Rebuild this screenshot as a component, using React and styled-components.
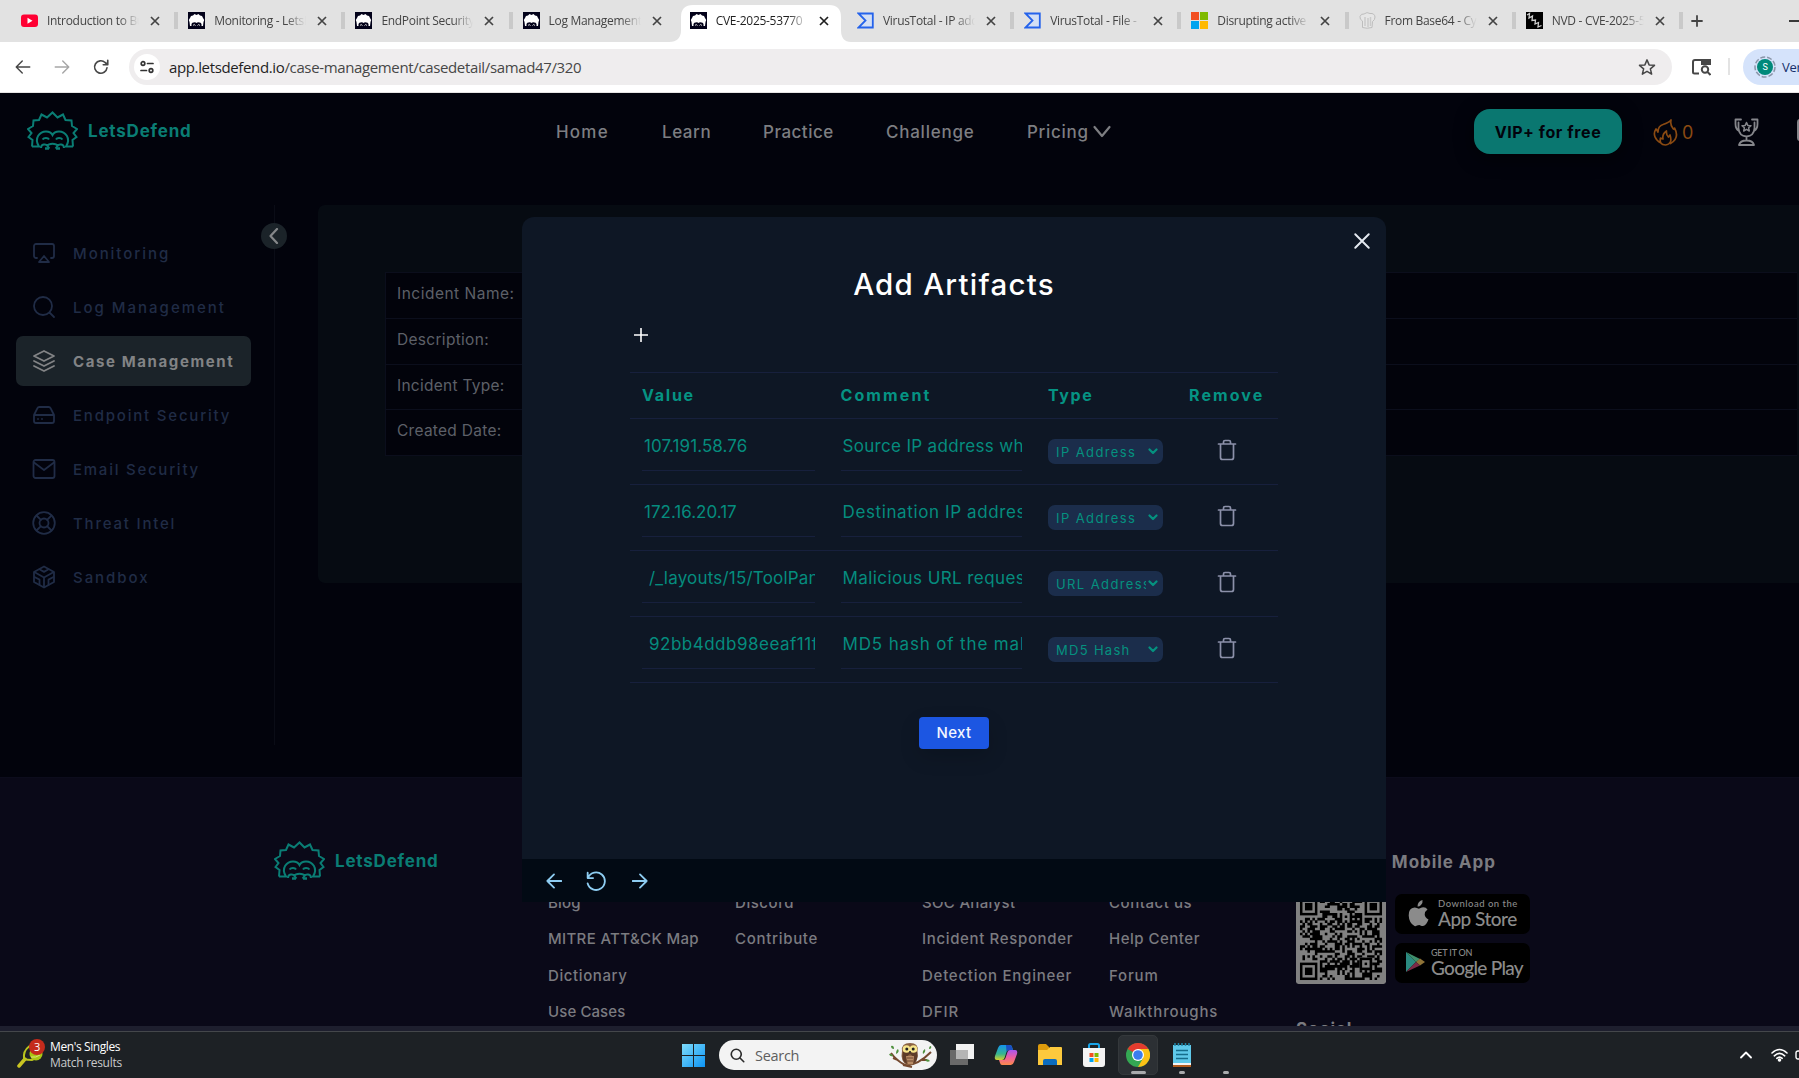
import React from "react";
import styled, { createGlobalStyle, css } from "styled-components";

const Global = createGlobalStyle`
  *{box-sizing:border-box}
  html,body{margin:0;padding:0;background:#02030c;overflow:hidden}
  body{font-family:Inter,"Liberation Sans",sans-serif}
  svg{display:block;flex:none}
`;

const ui = `"Open Sans","Noto Sans",sans-serif`;

const Screen = styled.div`width:1799px;height:1078px;display:flex;flex-direction:column;overflow:hidden;`;

/* ---------- browser ---------- */
const TabStrip = styled.div`
  height:42px;flex:none;background:#e2e2e2;display:flex;padding-left:9px;overflow:hidden;
`;
const Tab = styled.div`
  width:167.2px;height:42px;flex:none;padding:0 0 1px 12px;display:flex;align-items:center;position:relative;
`;
const TabShape = styled.svg`position:absolute;left:-9px;top:5px;z-index:0;`;
const TabTitle = styled.span`
  margin-left:9px;width:92px;flex:none;overflow:hidden;white-space:nowrap;position:relative;
  font:400 12px/18px ${ui};letter-spacing:-0.3px;color:${p => (p.$active ? "#1f1f1f" : "#444")};
  mask-image:linear-gradient(90deg,#000 78%,transparent 100%);
`;
const TabIcon = styled.span`width:17px;height:17px;flex:none;position:relative;`;
const TabClose = styled.svg`margin-left:11px;position:relative;`;
const TabSep = styled.span`position:absolute;right:-2px;top:12px;width:4px;height:17px;background:#c9c9c9;`;
const StripTools = styled.div`display:flex;align-items:center;padding:0 0 1px 10px;gap:86px;`;

const Toolbar = styled.div`
  height:51px;flex:none;background:#fff;display:flex;align-items:center;padding:0 0 1px 14px;border-bottom:1px solid #e6e4e4;
  overflow:hidden;
`;
const NavIcons = styled.div`display:flex;gap:21px;width:115px;flex:none;`;
const Omnibox = styled.div`
  width:1543px;height:36px;border-radius:18px;background:#efedee;display:flex;align-items:center;padding:0 16px 0 5px;flex:none;
`;
const SiteInfo = styled.span`width:26px;height:26px;border-radius:50%;background:#fff;display:grid;place-items:center;`;
const Url = styled.span`
  margin-left:9px;flex:1;font:400 15px/22px ${ui};letter-spacing:-0.36px;color:#474747;white-space:nowrap;
  b{font-weight:400;color:#1f1f1f}
`;
const ToolDivider = styled.span`width:2px;height:17px;background:#e3e3e3;margin:0 13px 0 17px;flex:none;`;
const SearchPanel = styled.svg`margin-left:19px;`;
const Profile = styled.div`
  width:120px;height:36px;flex:none;border-radius:18px 0 0 18px;background:#d5e3fb;display:flex;align-items:center;padding-left:11px;
  gap:6px;font:400 13px/20px ${ui};letter-spacing:-.3px;color:#17306a;
`;

/* ---------- page ---------- */
const Page = styled.main`height:933px;flex:none;position:relative;background:#02030c;overflow:hidden;`;
const Label = styled.span`white-space:nowrap;letter-spacing:${p => p.$t || 0}px;`;
const Header = styled.header`height:112px;display:flex;padding:0 0 0 27px;`;
const Brand = styled.div`
  display:flex;align-items:center;gap:10px;color:#0a7d74;font-weight:700;font-size:17px;letter-spacing:.8px;height:39px;
`;
const HeaderBrand = styled(Brand)`margin-top:18px;width:529px;flex:none;`;
const Menu = styled.nav`
  display:flex;height:40px;margin-top:19px;align-items:center;color:#7d7e82;font-weight:500;font-size:17px;width:918px;flex:none;
`;
const MenuItem = styled.span`
  width:${p => p.$w}px;flex:none;letter-spacing:${p => p.$t || 0}px;display:flex;align-items:center;gap:4px;white-space:nowrap;
`;
const Vip = styled.button`
  width:148px;height:45px;margin-top:16px;border:0;border-radius:16px;background:#0a7770;color:#02030c;
  font:700 16px/20px Inter,sans-serif;letter-spacing:.6px;flex:none;padding:0;box-shadow:0 4px 18px rgba(0,0,0,.6);
`;
const Streak = styled.div`
  display:flex;align-items:center;gap:4px;color:#8a4a12;font-size:18px;height:28px;margin:25px 0 0 31px;width:81px;flex:none;
`;
const Trophy = styled.div`margin-top:25px;width:63px;flex:none;`;
const Clipped = styled.span`width:20px;height:22px;margin-top:26px;border:2px solid #85868b;border-radius:3px;flex:none;`;

const Body = styled.div`height:572px;display:flex;`;
const Side = styled.aside`
  width:275px;height:540px;flex:none;border-right:1px solid #0a0c16;padding:23px 0 0 16px;position:relative;
`;
const Collapse = styled.span`
  position:absolute;right:-13px;top:18px;width:26px;height:26px;border-radius:50%;background:#1b2329;display:grid;place-items:center;
`;
const SideItem = styled.div`
  width:235px;height:50px;margin-bottom:4px;border-radius:7px;display:flex;align-items:center;padding-left:16px;gap:17px;
  font-size:15px;letter-spacing:${p => p.$t}px;white-space:nowrap;
  ${p => (p.$active ? css`background:#1b2329;color:#828385;font-weight:700;` : css`color:#202c46;font-weight:500;`)}
`;
const Panel = styled.section`
  margin-left:43px;flex:1;height:378px;background:#060b12;border-radius:7px 0 0 7px;padding:67px 0 0 67px;
`;
const Facts = styled.div`border:1px solid #0b0e1c;border-right:0;border-bottom:0;background:#02030b;margin-right:2px;`;
const Fact = styled.div`
  height:45.8px;border-bottom:1px solid #0b0e1c;padding:11px 0 0 11px;font-size:15.5px;line-height:20px;color:#5d6068;
  letter-spacing:${p => p.$t}px;
`;

const PageFooter = styled.footer`
  height:249px;background:#0a0918;border-top:1px solid #0c0c1c;display:flex;padding:63px 0 0 274px;color:#7b7b80;
`;
const FooterBrand = styled(Brand)`width:274px;flex:none;`;
const LinkCol = styled.div`width:187px;flex:none;padding-top:44px;display:flex;flex-direction:column;`;
const FootLink = styled.span`
  height:36.3px;line-height:36.3px;font-size:15px;font-weight:500;white-space:nowrap;letter-spacing:${p => p.$t || 0}px;
`;
const AppCol = styled.div`display:flex;flex-direction:column;padding-top:10px;`;
const FootTitle = styled.h4`
  margin:0;font-size:17px;line-height:22px;height:22px;font-weight:700;white-space:nowrap;letter-spacing:.95px;
`;
const Stores = styled.div`display:flex;gap:9px;margin:21px 0 34px;height:90px;`;
const Badges = styled.div`display:flex;flex-direction:column;gap:9px;`;
const Badge = styled.div`
  width:135px;height:40px;border-radius:7px;background:#000;display:flex;align-items:center;color:#8b8b8b;padding-left:${p => p.$l}px;gap:${p => p.$g}px;
  padding-bottom:2px;
`;
const BadgeText = styled.span`
  display:flex;flex-direction:column;font-family:Lato,sans-serif;
  small{font-size:${p => p.$s}px;line-height:11px;letter-spacing:${p => p.$st}px;white-space:nowrap;font-weight:500}
  b{font-weight:500;font-size:19px;line-height:19px;letter-spacing:${p => p.$t}px;white-space:nowrap}
`;

/* ---------- modal ---------- */
const Modal = styled.div`
  position:absolute;left:522px;top:124px;width:864px;height:685px;border-radius:12px 12px 0 0;background:#0e1725;
  display:flex;flex-direction:column;overflow:hidden;
`;
const ModalTop = styled.div`height:49px;display:flex;justify-content:flex-end;padding:15px 15px 0 0;`;
const ModalTitle = styled.h2`
  margin:0;height:36px;line-height:36px;text-align:center;color:#fff;font-weight:500;font-size:29.5px;letter-spacing:1.25px;
`;
const AddRow = styled.div`height:70px;padding:26px 0 0 112px;`;
const Table = styled.div`width:648px;margin-left:108px;border-top:1px solid #17203d;`;
const row = css`display:grid;grid-template-columns:198.500px 207.500px 141px 1fr;padding-left:12px;border-bottom:1px solid #17203d;`;
const HeadRow = styled.div`
  ${row} height:46px;align-items:center;color:#059383;font-weight:700;font-size:16px;padding-bottom:2px;
`;
const Row = styled.div`${row} height:66px;`;
const Input = styled.div`
  width:${p => p.$w}px;height:38px;margin-top:14px;border-bottom:1px solid #17203d;color:#058c7e;font-size:17px;line-height:27px;
  padding-left:${p => p.$l}px;overflow:hidden;white-space:nowrap;letter-spacing:${p => p.$t || 0}px;font-weight:400;
`;
const Select = styled.div`
  width:115px;height:25px;margin-top:20px;border-radius:7px;background:#1b2d4b;color:#05917f;display:flex;align-items:center;
  padding:1px 4px 0 8px;font-size:13px;gap:2px;
  span{width:90px;overflow:hidden;white-space:nowrap;letter-spacing:${p => p.$t}px;line-height:20px}
`;
const Trash = styled.div`padding:20px 0 0 28px;`;
const Next = styled.button`
  width:70px;height:32px;border:0;border-radius:4px;background:#1c56e2;color:#f3f6ff;font:500 15px/20px Inter,sans-serif;
  letter-spacing:.3px;margin:34px auto 0;padding:0;box-shadow:0 8px 20px rgba(0,0,0,.16);
`;
const ModalBar = styled.div`
  height:43px;margin-top:auto;background:#020a14;display:grid;grid-template-columns:40px 46px 20px;align-items:center;padding-left:24px;
`;

/* ---------- taskbar ---------- */
const ScrollEdge = styled.div`height:6px;flex:none;background:#1e1f2e;border-bottom:1px solid #44474b;`;
const Taskbar = styled.div`
  height:46px;flex:none;background:#1d2125;display:flex;align-items:center;font-family:${ui};color:#fff;
`;
const Widget = styled.div`
  width:682px;display:flex;padding-left:17px;gap:5px;font-size:12px;line-height:16px;letter-spacing:-.2px;align-items:center;
  div{display:flex;flex-direction:column}
  em{font-style:normal;color:#c9cacb}
`;
const SearchBox = styled.div`
  width:218px;height:30px;margin:0 13px 0 14px;border-radius:15px;background:#f3f3f3;display:flex;align-items:center;padding:0 5px 0 11px;
  color:#5e5e5e;font-size:14.5px;
  span{margin-left:10px;flex:1;letter-spacing:-.3px}
`;
const Pin = styled.div`
  width:${p => p.$w || 44}px;height:46px;flex:none;display:flex;flex-direction:column;align-items:center;padding-top:11px;position:relative;
  margin-left:${p => p.$ml || 0}px;
`;
const ActivePin = styled(Pin)`
  width:40px;height:40px;margin:0 2px;padding-top:7px;border-radius:5px;background:#2c3034;border:1px solid #34383b;
`;
const Mark = styled.i`width:${p => p.$w}px;height:3px;border-radius:2px;background:#a9abad;position:absolute;bottom:${p => p.$b ?? 4}px;`;
const Tray = styled.div`
  margin-left:auto;display:grid;grid-template-columns:31px 24px 17px;align-items:center;width:59px;overflow:hidden;
`;

/* ---------- drawings ---------- */
const Line = ({ s = 24, w = 2, c = "currentColor", children, vb = "0 0 24 24", h }) => (
  <svg width={s} height={h || s} viewBox={vb} fill="none" stroke={c} strokeWidth={w} strokeLinecap="round" strokeLinejoin="round">{children}</svg>
);

const Hedgehog = () => (
  <svg width="51" height="39" viewBox="0 0 51 39" fill="none" stroke="#0a7d74" strokeWidth="2">
    <path d="M5 35.500L5.500 29L1.500 26L4.500 22L1 18L6 15L6.500 9.500L12 9L14.500 3.500L20 6.500L25.500 1.500L30.500 6.500L36 3.500L38.500 9L44.500 9.500L45 15L50 18L46.500 22L49.500 26L45.500 29L46 35.500" />
    <path d="M5 35.500H12C6.500 27 13 20.500 19 20.500C22 20.500 24.500 22 25.500 24C26.500 22 29 20.500 32 20.500C38 20.500 44.500 27 39 35.500H46" />
    <path d="M14 37C14 33 19 32.500 20.500 35L22.500 37.500M37 37C37 33 32 32.500 30.500 35L28.500 37.500M20 35C22 32 29 32 31 35" />
    <path d="M15.500 28.500C17 26.500 21 26.500 22 28.500M29 28.500C30 26.500 34 26.500 35.500 28.500" />
    <path d="M18 37.500h4M29 37.500h4" strokeWidth="2.500" />
  </svg>
);

const Favicons = {
  yt: <svg width="17" height="17" viewBox="0 0 17 17"><rect y="2.500" width="17" height="12.500" rx="3" fill="#ff0033" /><path d="M6.500 5.800v6L11.500 8.800z" fill="#fff" /></svg>,
  ld: <svg width="17" height="17" viewBox="0 0 17 17"><rect width="17" height="17" fill="#03021a" /><path d="M2 14L1.500 10L.8 8L2 6L3 4L5 3.500L6.500 2L8.500 3L10.500 2L12 3.500L14 4L15 6L16.200 8L15.500 10L15 14H13.500Q14 10.500 11.500 10.500Q9.500 10 8.500 11Q7.500 10 5.500 10.500Q3 10.500 3.500 14z" fill="#fff" /><path d="M5 13.500q1-2 2.500 0M9.500 13.500q1-2 2.500 0" stroke="#ddd" fill="none" /></svg>,
  vt: <svg width="17" height="17" viewBox="0 0 17 17"><path d="M1.500 1.500H15.800V15.500H1.500L8.500 8.500z" fill="#d3dff5" stroke="#2563eb" strokeWidth="1.800" /></svg>,
  ms: <svg width="17" height="17" viewBox="0 0 17 17"><path fill="#f25022" d="M0 0h8v8H0z" /><path fill="#7fba00" d="M9 0h8v8H9z" /><path fill="#00a4ef" d="M0 9h8v8H0z" /><path fill="#ffb900" d="M9 9h8v8H9z" /></svg>,
  chef: <svg width="17" height="17" viewBox="0 0 17 17"><path d="M3.500 15.500V9Q.5 7.500 1 4.500Q2 1.500 5 2Q8-.5 11 1.500Q15.500 1 16 5Q16 8 13.500 9.500L13 15.500Q8 17 3.500 15.500z" fill="#e6e6e6" stroke="#bdbdbd" /><path d="M6 5v9M9 6v9M11.500 5v9" stroke="#cacaca" strokeWidth="1.500" /></svg>,
  nvd: <svg width="17" height="17" viewBox="0 0 17 17"><rect width="17" height="17" fill="#000" /><path d="M1 3L3.500 1.500L3 6L6.500 4L6 8.500L9.500 8L9 12L12.500 10.500L12 15L15.500 13.500" fill="none" stroke="#cfcfcf" strokeWidth="1.300" /></svg>
};

const tabs = [
  ["yt", "Introduction to Bu"], ["ld", "Monitoring - LetsD"], ["ld", "EndPoint Security"], ["ld", "Log Management"],
  ["ld", "CVE-2025-53770 ", true], ["vt", "VirusTotal - IP addr"], ["vt", "VirusTotal - File - "], ["ms", "Disrupting active e"],
  ["chef", "From Base64 - Cyb"], ["nvd", "NVD - CVE-2025-5"]
];

const Qr = () => {
  const n = 33;
  let seed = 77;
  const cells = [];
  const inFinder = (x, y) => (x < 8 && y < 8) || (x > n - 9 && y < 8) || (x < 8 && y > n - 9);
  for (let y = 0; y < n; y++) for (let x = 0; x < n; x++) {
    seed = (seed * 1103515245 + 12345) % 2147483648;
    if (!inFinder(x, y) && seed / 2147483648 > 0.47) cells.push(`M${x} ${y}h1.02v1.02h-1.02z`);
  }
  const finder = (x, y) => (
    <g key={`${x}-${y}`}><rect x={x + .5} y={y + .5} width="6" height="6" fill="none" stroke="#000" /><rect x={x + 2} y={y + 2} width="3" height="3" /></g>
  );
  return (
    <svg width="90" height="90" viewBox="-1.600 -1.600 36.200 36.200">
      <rect x="-1.600" y="-1.600" width="36.200" height="36.200" rx="1" fill="#818181" />
      <path d={cells.join("")} />
      {finder(0, 0)}{finder(n - 7, 0)}{finder(0, n - 7)}
      <rect x="24" y="24" width="5" height="5" fill="#818181" /><rect x="24.500" y="24.500" width="4" height="4" fill="none" stroke="#000" /><rect x="26" y="26" width="1" height="1" />
    </svg>
  );
};

const Owl = () => (
  <svg width="44" height="26" viewBox="0 0 44 26">
    <path d="M3 11Q9 19 17 23Q29 24 43 10M5 16L10 18M34 18L39 18M15 23L24 25" stroke="#75492f" strokeWidth="2" fill="none" />
    <path d="M3 4q3-1 3 3q-3 0-3-3M1 12q3-1 4 2q-3 1-4-2M8 12q0-4 2-5q2 3-2 5M35 12q-1-3 2-5q1 3-2 5M41 7q0-3 2-3q1 3-2 3M37 18q3-2 5 1q-3 2-5-1" fill="#50913f" />
    <path d="M14 9Q13 1 22 1Q31 1 29.500 9Q31 20 24 23H19Q12 19 14 9z" fill="#8a6142" />
    <path d="M15 10Q13 19 19 22Q17 14 22 12Q27 14 25 22Q31 18 29 10z" fill="#5d3b28" />
    <path d="M18 14h8l-1 8h-5z" fill="#b98c66" /><path d="M19 16h6M19 19h6" stroke="#6d4730" />
    <circle cx="18.500" cy="7" r="3.800" fill="#f7e58b" /><circle cx="25.500" cy="7" r="3.800" fill="#f7e58b" />
    <circle cx="18.800" cy="7" r="1.500" fill="#222" /><circle cx="25.200" cy="7" r="1.500" fill="#222" /><path d="M21 9h2l-1 3z" fill="#333" />
  </svg>
);

const sideItems = [
  ["Monitoring", 1.95, <><path d="M5 17H4a2 2 0 0 1-2-2V5a2 2 0 0 1 2-2h16a2 2 0 0 1 2 2v10a2 2 0 0 1-2 2h-1" /><path d="m12 15 5 6H7Z" /></>],
  ["Log Management", 2, <><circle cx="11" cy="11" r="9" /><path d="m22 22-4.500-4.500" /></>],
  ["Case Management", 1.6, <><path d="M12 2 2 7l10 5 10-5-10-5Z" /><path d="m2 17 10 5 10-5" /><path d="m2 12 10 5 10-5" /></>],
  ["Endpoint Security", 1.8, <><path d="M22 12H2M5.450 5.110 2 12v6a2 2 0 0 0 2 2h16a2 2 0 0 0 2-2v-6l-3.450-6.890A2 2 0 0 0 16.760 4H7.240a2 2 0 0 0-1.790 1.110z" /><path d="M6 16h.01M10 16h.01" /></>],
  ["Email Security", 1.75, <><rect x="1.500" y="3" width="21" height="18" rx="2" /><path d="m2 5.500 10 7.500 10-7.500" /></>],
  ["Threat Intel", 1.8, <><circle cx="12" cy="12" r="10.800" /><circle cx="12" cy="12" r="4.500" /><path d="m4.500 4.500 4.400 4.400M15.100 8.900l4.400-4.400M15.100 15.100l4.400 4.400M8.900 15.100l-4.400 4.400" /></>],
  ["Sandbox", 1.95, <><path d="M22 17V7L12 1.500 2 7v10l10 5.500z" /><path d="m7.500 4.300 4.500 2.600 4.500-2.600M7.500 19.800v-5.200L2.500 12M21.500 12l-5 2.600v5.200M2.700 7.300 12 12.500l9.300-5.200M12 22V12.500" /></>]
];

const facts = [["Incident Name:", .5], ["Description:", .3], ["Incident Type:", .27], ["Created Date:", .27]];

const artifacts = [
  { value: "107.191.58.76", indent: 2, vt: .08, comment: "Source IP address which", ct: .32, type: "IP Address", tt: 1.4 },
  { value: "172.16.20.17", indent: 2, vt: 0, comment: "Destination IP address", ct: .62, type: "IP Address", tt: 1.4 },
  { value: "/_layouts/15/ToolPane", indent: 7, vt: .2, comment: "Malicious URL requested", ct: .42, type: "URL Address", tt: 1.4 },
  { value: "92bb4ddb98eeaf11fd", indent: 7, vt: .5, comment: "MD5 hash of the malicious", ct: .85, type: "MD5 Hash", tt: 1.3 }
];

const linkCols = [
  [["Blog", .2], ["MITRE ATT&CK Map", .35], ["Dictionary", .6], ["Use Cases", .1]],
  [["Discord", .55], ["Contribute", .7]],
  [["SOC Analyst", .3], ["Incident Responder", .65], ["Detection Engineer", .75], ["DFIR", .9]],
  [["Contact us", .55], ["Help Center", .5], ["Forum", .8], ["Walkthroughs", .85]]
];

export default function App() {
  return (
    <Screen>
      <Global />
      <TabStrip>
        {tabs.map(([icon, title, active], i) => (
          <Tab key={i}>
            {active && (
              <TabShape width="182" height="37" viewBox="0 0 182 37"><path d="M0 37Q12 37 12 25V12Q12 0 24 0H160Q172 0 172 12V25Q172 37 182 37z" fill="#fff" /></TabShape>
            )}
            <TabIcon>{Favicons[icon]}</TabIcon>
            <TabTitle $active={active}>{title}</TabTitle>
            <TabClose width="10" height="10" viewBox="0 0 10 10" stroke={active ? "#1f1f1f" : "#444"} strokeWidth="1.700"><path d="M1 1l8 8M9 1l-8 8" /></TabClose>
            {i !== 3 && i !== 4 && <TabSep />}
          </Tab>
        ))}
        <StripTools>
          <Line s={12} w={1.8} vb="0 0 12 12" c="#444"><path d="M6 1v10M1 6h10" /></Line>
          <Line s={12} w={1.4} vb="0 0 12 12" c="#000"><path d="M0 6h12" /></Line>
        </StripTools>
      </TabStrip>
      <Toolbar>
        <NavIcons>
          <Line s={18} w={1.9} c="#474747"><path d="M21 12H4M11 4l-8 8 8 8" /></Line>
          <Line s={18} w={1.9} c="#a6a6a6"><path d="M3 12h17M13 4l8 8-8 8" /></Line>
          <Line s={18} w={2.2} c="#474747"><path d="M20 13a8.300 8.300 0 1 1-2.500-7L21 9M21 3v6h-6" /></Line>
        </NavIcons>
        <Omnibox>
          <SiteInfo><Line s={14} h={14} w={1.7} vb="0 0 14 14" c="#333"><circle cx="3" cy="3.500" r="1.800" /><path d="M7.500 3.500H13M1 10.500h5.500" /><circle cx="11" cy="10.500" r="1.800" /></Line></SiteInfo>
          <Url><b>app.letsdefend.io</b>/case-management/casedetail/samad47/320</Url>
          <Line s={18} w={2} c="#474747"><path d="m12 2.500 2.800 6.700 7.200.6-5.500 4.700 1.700 7L12 17.800l-6.200 3.700 1.700-7L2 9.800l7.200-.6z" /></Line>
        </Omnibox>
        <SearchPanel width="20" height="18" viewBox="0 0 20 18" fill="none" stroke="#474747" strokeWidth="2"><path d="M8 15.500H3.500Q2 15.500 2 14V4Q2 2 4 2H19V6H11V2" /><path d="M11 2h7.500v4H11z" fill="#474747" /><circle cx="14" cy="11.500" r="3.200" /><path d="m16.500 14 3 3" /></SearchPanel>
        <ToolDivider />
        <Profile>
          <svg width="22" height="22" viewBox="0 0 22 22"><circle cx="11" cy="11" r="10" fill="none" stroke="#8a95a8" strokeWidth="1.500" strokeDasharray="5 2" /><circle cx="11" cy="11" r="8" fill="#00897b" /><text x="11" y="14.200" fontSize="9" fill="#fff" textAnchor="middle" fontFamily="Roboto">S</text></svg>
          <Label $t={-.3}>Verify</Label>
        </Profile>
      </Toolbar>

      <Page>
        <Header>
          <HeaderBrand><Hedgehog /><Label $t={.8}>LetsDefend</Label></HeaderBrand>
          <Menu>
            <MenuItem $w={106} $t={1.2}>Home</MenuItem>
            <MenuItem $w={101} $t={.55}>Learn</MenuItem>
            <MenuItem $w={123} $t={.5}>Practice</MenuItem>
            <MenuItem $w={141} $t={.75}>Challenge</MenuItem>
            <MenuItem $w={90} $t={.7}>Pricing<Line s={18} h={14} w={2.2} vb="0 0 18 14"><path d="m1.500 2 7.500 9 7.500-9" /></Line></MenuItem>
          </Menu>
          <Vip>VIP+ for free</Vip>
          <Streak>
            <Line s={25} h={27} w={1.7} vb="0 0 25 27"><path d="M8 24C2 21-.5 15 3 10Q4.500 12 5 13Q5 7 10 5.500Q16 3.500 18 1Q17 6 20 9.500Q21 11 21.500 9Q27 19 17.500 24.500M12.500 26Q6 26 7.500 19Q9 20 10 20Q9 15 13.500 12Q13 16 15.500 18L17 16Q20 25 12.500 26z" /></Line>
            <Label>0</Label>
          </Streak>
          <Trophy>
            <Line s={25} h={28} w={1.8} vb="0 0 25 28" c="#85868b"><path d="M7 1.500H1.500V6Q1.500 11 5 13M18 1.500H23.500V6Q23.500 11 20 13M4.500 4.500V10Q5 18 12.500 18.500Q20 18 20.500 10V4.500M12.500 18.500v4M5 27q1-4.500 7.500-4.500T20 27z" /><path d="m12.500 4.500 1.300 2.900 3.200.3-2.400 2.100.7 3.200-2.800-1.700-2.800 1.700.7-3.200-2.400-2.100 3.200-.3z" strokeWidth="1.500" /></Line>
          </Trophy>
          <Clipped />
        </Header>
        <Body>
          <Side>
            <Collapse><Line s={12} h={16} w={2.2} vb="0 0 12 16" c="#85878a"><path d="m9 1-6.500 7L9 15" /></Line></Collapse>
            {sideItems.map(([name, t, d]) => (
              <SideItem key={name} $t={t} $active={name === "Case Management"}><Line s={24} w={1.8}>{d}</Line>{name}</SideItem>
            ))}
          </Side>
          <Panel>
            <Facts>{facts.map(([name, t]) => <Fact key={name} $t={t}>{name}</Fact>)}</Facts>
          </Panel>
        </Body>
        <PageFooter>
          <FooterBrand><Hedgehog /><Label $t={.8}>LetsDefend</Label></FooterBrand>
          {linkCols.map((col, i) => (
            <LinkCol key={i}>{col.map(([name, t]) => <FootLink key={name} $t={t}>{name}</FootLink>)}</LinkCol>
          ))}
          <AppCol>
            <FootTitle>Download Mobile App</FootTitle>
            <Stores>
              <Qr />
              <Badges>
                <Badge $l={13} $g={9}>
                  <svg width="21" height="27" viewBox="0 0 21 27" fill="#8b8b8b"><path d="M14.500 0Q15 3 13 5T9.500 6.500Q9.500 3.500 11 2T14.500 0zM19.500 9.500Q16.500 11.500 16.700 14.500T20.500 19.500Q18 26 15 26Q13.500 26 12.500 25.400T9 25.500Q7.500 26.500 6.500 26Q1 23 .7 15.500Q.5 8 6.500 7.500Q8 7.500 9.500 8.300T12 8.200Q17 6 19.500 9.500z" /></svg>
                  <BadgeText $s={9.5} $st={.5} $t={-.5}><small>Download on the</small><b>App Store</b></BadgeText>
                </Badge>
                <Badge $l={11} $g={6}>
                  <svg width="19" height="22" viewBox="0 0 19 22"><path d="M0 1v20L10 11z" fill="#2b8a80" /><path d="M0 1l14 7-4 3z" fill="#3f8f6b" /><path d="M14 7.500L19 11l-5 3.500L10 11z" fill="#8f7438" /><path d="M0 21l14-6.500L10 11z" fill="#7c2a46" /></svg>
                  <BadgeText $s={9} $st={-.2} $t={-.7}><small>GET IT ON</small><b>Google Play</b></BadgeText>
                </Badge>
              </Badges>
            </Stores>
            <FootTitle>Social</FootTitle>
          </AppCol>
        </PageFooter>

        <Modal>
          <ModalTop><Line s={18} w={2.6} c="#e4e9f0"><path d="M3 3l18 18M21 3 3 21" /></Line></ModalTop>
          <ModalTitle>Add Artifacts</ModalTitle>
          <AddRow><Line s={14} w={1.6} vb="0 0 14 14" c="#fff"><path d="M7 .5v13M.5 7h13" /></Line></AddRow>
          <Table>
            <HeadRow><Label $t={1.75}>Value</Label><Label $t={2.1}>Comment</Label><Label $t={1.6}>Type</Label><Label $t={2.1}>Remove</Label></HeadRow>
            {artifacts.map(a => (
              <Row key={a.value}>
                <Input $w={173} $l={a.indent} $t={a.vt}>{a.value}</Input>
                <Input $w={181} $l={2} $t={a.ct}>{a.comment}</Input>
                <Select $t={a.tt}><span>{a.type}</span><Line s={10} h={8} w={2.2} vb="0 0 10 8"><path d="m1.500 1.500 3.500 3.500 3.500-3.500" /></Line></Select>
                <Trash><Line s={20} h={22} w={1.7} vb="0 0 20 22" c="#8b90a9"><path d="M1.500 5h17M6.500 5V3q0-1.500 1.500-1.500h4q1.500 0 1.500 1.500v2M3.500 5v13.500Q3.500 20.500 5.500 20.500h9q2 0 2-2V5" /></Line></Trash>
              </Row>
            ))}
          </Table>
          <Next>Next</Next>
          <ModalBar>
            <Line s={16} w={2.7} c="#8ecdf2"><path d="M23 12H2M12 2 2 12l10 10" /></Line>
            <Line s={20} w={2.2} c="#8ecdf2"><path d="M2 2v6.500h6.500M2.500 8A10.500 10.500 0 1 1 2 15" /></Line>
            <Line s={16} w={2.7} c="#8ecdf2"><path d="M1 12h21M12 2l10 10-10 10" /></Line>
          </ModalBar>
        </Modal>
      </Page>

      <ScrollEdge />
      <Taskbar>
        <Widget>
          <svg width="28" height="32" viewBox="0 0 28 32"><path d="M2 27l6-7" stroke="#c9c422" strokeWidth="3.500" strokeLinecap="round" /><path d="M7 20Q6 12 12 7.500Q18 5 22 10Q23 19 15 21Q10 21 7 20z" fill="none" stroke="#b9c41e" strokeWidth="2" /><circle cx="19" cy="15" r="6.500" fill="#a9c614" /><path d="M14 18q5 1 9 -2" stroke="#dbe77c" fill="none" /><circle cx="20" cy="8" r="8" fill="#c42b1c" /><text x="20" y="12" fill="#fff" fontSize="11" textAnchor="middle" fontFamily="Open Sans">3</text></svg>
          <div><Label $t={-.4}>Men's Singles</Label><em><Label $t={-.3}>Match results</Label></em></div>
        </Widget>
        <svg width="23" height="23" viewBox="0 0 23 23"><defs><linearGradient id="win" x2="1" y2="1"><stop stopColor="#7fdcfb" /><stop offset="1" stopColor="#0c94f5" /></linearGradient></defs><path d="M0 0h11v11H0zM12 0h11v11H12zM0 12h11v11H0zM12 12h11v11H12z" fill="url(#win)" /></svg>
        <SearchBox><Line s={15} w={2.6} c="#2b2b2b"><circle cx="10" cy="10" r="8" /><path d="m16 16 6 6" /></Line><span>Search</span><Owl /></SearchBox>
        <Pin $w={24}><svg width="24" height="24" viewBox="0 0 24 24"><path d="M0 7h18v15H0z" fill="#6a6a6a" /><path d="M6 1h18v15H6z" fill="#f2f2f2" /><path d="M6 7h12v9H6z" fill="#b5b5b5" /></svg></Pin>
        <Pin $ml={10}><svg width="24" height="24" viewBox="0 0 24 24"><defs><linearGradient id="ca" x2="0" y2="1"><stop stopColor="#1393ee" /><stop offset=".6" stopColor="#37b58e" /><stop offset="1" stopColor="#d4d12c" /></linearGradient><linearGradient id="cb" x2="0" y2="1"><stop stopColor="#a855f0" /><stop offset=".5" stopColor="#ee5fa0" /><stop offset="1" stopColor="#fb8a4a" /></linearGradient></defs><path d="M7 2h9q1.500 0 2 2l1 3h-4q-2 0-2.500 2l-2 6q-.5 2-2.500 2H3q-3 0-2-4l3-8q1-3 3-3z" fill="url(#ca)" /><path d="M17 22H8q-1.500 0-2-2l-1-3h4q2 0 2.500-2l2-6q.5-2 2.500-2h5q3 0 2 4l-3 8q-1 3-3 3z" fill="url(#cb)" /><path d="M12 2h4q1.500 0 2 2l1 3h-4q-2 0-2.500 2z" fill="#1a4fc4" /></svg></Pin>
        <Pin><svg width="24" height="24" viewBox="0 0 24 24"><path d="M0 3q0-2 2-2h6l3 3v5H0z" fill="#dd9b0c" /><path d="M0 7h9l3-3h11q1 0 1 1v17H0z" fill="#fcc93d" /><path d="M5 22v-4q0-2 2-2h10q2 0 2 2v4z" fill="#0b6cbf" /></svg></Pin>
        <Pin><svg width="24" height="24" viewBox="0 0 24 24"><path d="M7 6V2.500Q7 1 8.500 1h7Q17 1 17 2.500V6" fill="none" stroke="#19a4e8" strokeWidth="2" /><path d="M1 5h22v16q0 3-3 3H4q-3 0-3-3z" fill="#f3f3f3" /><path fill="#f25022" d="M7.500 10h4v4h-4z" /><path fill="#7fba00" d="M12.500 10h4v4h-4z" /><path fill="#00a4ef" d="M7.500 15h4v4h-4z" /><path fill="#ffb900" d="M12.500 15h4v4h-4z" /></svg></Pin>
        <ActivePin><svg width="24" height="24" viewBox="0 0 24 24"><circle cx="12" cy="12" r="12" fill="#34a853" /><path d="M12 12L1.600 6A12 12 0 0 1 22.400 6z" fill="#e33b2e" /><path d="M12 6h10.400A12 12 0 0 1 12 24L17.200 15z" fill="#fbc116" /><circle cx="12" cy="12" r="6" fill="#fff" /><circle cx="12" cy="12" r="4.800" fill="#3b7ded" /></svg><Mark $w={15} $b={0} /></ActivePin>
        <Pin><svg width="18" height="24" viewBox="0 0 18 24"><path d="M0 2h18v18H0z" fill="#5fc9ea" /><path d="M0 20h18v2H0z" fill="#f4f4f4" /><path d="M0 22h18v2H0z" fill="#b35c1e" /><path d="M2 0v3M5.500 0v3M9 0v3M12.500 0v3M16 0v3" stroke="#2187a8" strokeWidth="1.500" /><path d="M3 7.500h12M3 11.500h12M3 15.500h12" stroke="#156d8c" strokeWidth="1.700" /></svg><Mark $w={6} /></Pin>
        <Pin><Mark $w={6} /></Pin>
        <Tray>
          <Line s={12} h={8} w={1.8} vb="0 0 12 8" c="#fff"><path d="m1 6.500 5-5 5 5" /></Line>
          <Line s={17} h={14} w={1.6} vb="0 0 17 14" c="#fff"><path d="M1 5q7.500-7 15 0M3.300 7.800q5.200-4.800 10.400 0M5.800 10.300q2.700-2.500 5.400 0" /><circle cx="8.500" cy="12" r="1" fill="#fff" /></Line>
          <Line s={17} h={10} w={1.4} vb="0 0 17 10" c="#fff"><rect x="1" y="1" width="14" height="8" rx="2" /></Line>
        </Tray>
      </Taskbar>
    </Screen>
  );
}
